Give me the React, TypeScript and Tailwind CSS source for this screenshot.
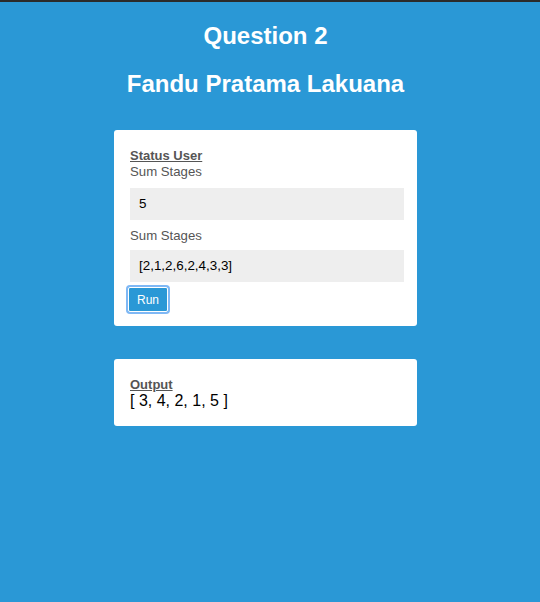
const App: React.FC = () => {
	return (
		<div className="min-h-[602px] bg-[#2a98d6] border-t-2 border-[#2b2b2b] font-['Liberation_Sans',Arial,sans-serif]">
			<div className="w-[531px]">
				<div className="pt-[19px] text-center text-white font-bold">
					<h2 className="text-[24px] leading-[30px]">Question 2</h2>
					<h2 className="mt-[18px] text-[24px] leading-[30px]">Fandu Pratama Lakuana</h2>
				</div>
				<div className="mx-auto mt-[31px] w-[303px]">
					<div className="bg-white rounded-[3px] pl-4 pr-[13px] pt-[18px] pb-[14px]">
						<div className="text-[13px] leading-[15px] font-bold underline text-[#555]">Status User</div>
						<label className="block text-[13.2px] leading-[18px] text-[#555]">Sum Stages</label>
						<div className="mt-[7px] h-[32px] bg-[#eeeeee] px-[9px] flex items-center text-[13.4px] text-black">5</div>
						<label className="block mt-[7px] text-[13.2px] leading-[18px] text-[#555]">Sum Stages</label>
						<div className="mt-[5px] h-[32px] bg-[#eeeeee] px-[9px] flex items-center text-[13.4px] text-black">[2,1,2,6,2,4,3,3]</div>
						<button className="mt-[5px] -ml-[2px] h-[25px] px-[8px] bg-[#2a98d6] text-white text-[12px] rounded-[2px] ring-2 ring-[#7fb8f5] border border-white">
							Run
						</button>
					</div>
					<div className="mt-[33px] bg-white rounded-[3px] pl-4 pr-[13px] pt-[18px] pb-[16px]">
						<div className="text-[13px] leading-[15px] font-bold underline text-[#555]">Output</div>
						<div className="text-[16px] leading-[18px] text-black">[ 3, 4, 2, 1, 5 ]</div>
					</div>
				</div>
			</div>
		</div>
	);
};

export default App;
